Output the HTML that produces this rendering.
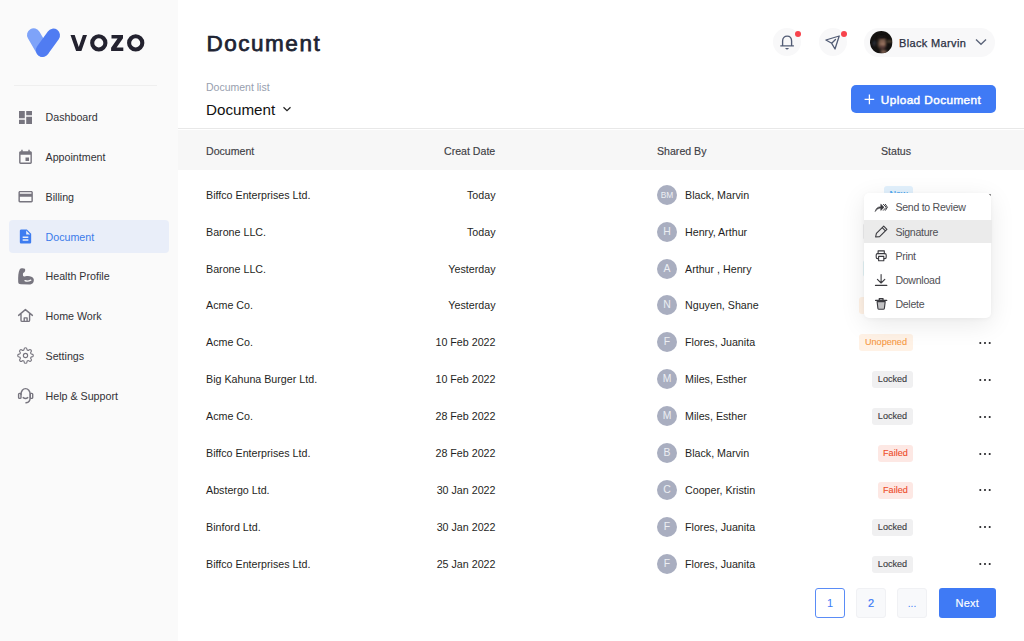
<!DOCTYPE html>
<html><head><meta charset="utf-8">
<style>
*{box-sizing:border-box;margin:0;padding:0}
html,body{width:1024px;height:641px;overflow:hidden;background:#fff;font-family:"Liberation Sans",sans-serif;color:#1f1f24}
.abs{position:absolute}
#side{position:absolute;left:0;top:0;width:178px;height:641px;background:#fafafa}
.nav{position:absolute;left:0;width:178px;height:20px;font-size:10.7px;color:#323237;line-height:20px}
.nav span{position:absolute;left:45.5px;top:0}
.nav svg{position:absolute}
.th{position:absolute;top:144px;font-size:10.6px;color:#404045;line-height:14px;-webkit-text-stroke:0.15px #404045}
.row{position:absolute;left:178px;width:846px;height:37px}
.row .c1{position:absolute;left:28px;top:11.6px;font-size:10.7px;line-height:14px;color:#1f1f24}
.row .c2{position:absolute;right:528.5px;top:11.6px;font-size:10.7px;line-height:14px;color:#1f1f24}
.row .av{position:absolute;left:479px;top:8.6px;width:20px;height:20px;border-radius:50%;background:#a9aec0;color:#eceef3;font-size:10.4px;line-height:20px;text-align:center}
.row .nm{position:absolute;left:507px;top:11.6px;font-size:10.7px;line-height:14px;color:#1f1f24}
.badge{position:absolute;right:111px;top:10.3px;height:17px;line-height:16px;text-align:center;border-radius:3px;font-size:9.1px;-webkit-text-stroke:0.12px currentColor}
.b-lock{background:#f0f0f1;color:#3a3a3f;width:41px}
.b-fail{background:#fde8e4;color:#ee4c2a;width:35.2px}
.b-unop{background:#fff2e6;color:#f79a45;width:54px}
.b-new{background:#e2f1fd;color:#3aa0f0;width:29px}
.b-app{background:#e3f3f6;color:#36a6a0;width:50.5px}
.b-rev{background:#efeff0;color:#2f2f33;width:50.5px}
.dots{position:absolute;left:801.1px;top:16.9px;width:14px;height:4px}
.mi{position:absolute;left:31.4px;font-size:10.6px;line-height:14px;color:#505055;letter-spacing:-0.28px}
</style></head><body>
<div id="side">
  <!-- logo -->
  <svg class="abs" style="left:0;top:0" width="178" height="70" viewBox="0 0 178 70">
    <line x1="33.7" y1="35" x2="42.5" y2="50.2" stroke="#7ea3f9" stroke-width="13.4" stroke-linecap="round"/>
    <line x1="53.3" y1="35.3" x2="42.6" y2="50.2" stroke="#507cf2" stroke-width="13.4" stroke-linecap="round"/>
    <g fill="#23222f">
      <polygon points="70.5,35.1 74.7,35.1 78.75,46.9 82.9,35.1 87,35.1 81.4,50.9 76.1,50.9"/>
      <circle cx="98.8" cy="42.9" r="6.6" fill="none" stroke="#23222f" stroke-width="4.1"/>
      <polygon points="111.5,35 123,35 123,38.3 116.6,47.6 123.3,47.6 123.3,51 111.1,51 111.1,47.8 117.6,38.4 111.5,38.4"/>
      <circle cx="135.7" cy="42.9" r="6.6" fill="none" stroke="#23222f" stroke-width="4.1"/>
    </g>
  </svg>
  <div class="abs" style="left:14px;top:84.5px;width:143px;height:1px;background:#efefef"></div>

  <div class="abs" style="left:9px;top:219.7px;width:160px;height:33.7px;border-radius:4px;background:#e9eef9"></div>

  <div class="nav" style="top:107px">
    <svg style="left:19px;top:3.5px" width="13" height="13" viewBox="3 3 18 18"><path fill="#77757f" d="M3 13h8V3H3v10zm0 8h8v-6H3v6zm10 0h8V11h-8v10zm0-18v6h8V3h-8z"/></svg>
    <span>Dashboard</span></div>
  <div class="nav" style="top:147px">
    <svg style="left:17px;top:2px" width="17" height="17" viewBox="0 0 24 24"><path fill="#77757f" d="M17 12h-5v5h5v-5zM16 1v2H8V1H6v2H5c-1.11 0-1.99.9-1.99 2L3 19c0 1.1.89 2 2 2h14c1.1 0 2-.9 2-2V5c0-1.1-.9-2-2-2h-1V1h-2zm3 18H5V8h14v11z"/></svg>
    <span>Appointment</span></div>
  <div class="nav" style="top:187px">
    <svg style="left:17px;top:1.2px" width="17.3" height="17.3" viewBox="0 0 24 24"><path fill="#77757f" d="M20 4H4c-1.11 0-1.99.89-1.99 2L2 18c0 1.11.89 2 2 2h16c1.11 0 2-.89 2-2V6c0-1.11-.89-2-2-2zm0 14H4v-6h16v6zm0-10H4V6h16v2z"/></svg>
    <span>Billing</span></div>
  <div class="nav" style="top:227px;color:#3b7bea">
    <svg style="left:17px;top:1px" width="17" height="17" viewBox="0 0 24 24"><path fill="#3d7cf0" d="M14 2H6c-1.1 0-1.99.9-1.99 2L4 20c0 1.1.89 2 1.99 2H18c1.1 0 2-.9 2-2V8l-6-6zm2 16H8v-2h8v2zm0-4H8v-2h8v2zm-3-5V3.5L18.5 9H13z"/></svg>
    <span>Document</span></div>
  <div class="nav" style="top:266px">
    <svg style="left:12px;top:-4px" width="28" height="28" viewBox="0 0 28 28"><path fill="#77757f" d="M6.2 20 C6.0 15 6.2 10 7.8 7.2 C8.5 6.0 11.5 5.8 12.8 6.8 C13.5 7.5 13.3 9.8 12.3 10.3 C11 10.8 10.8 11.5 11 13.5 C11.2 14.6 12.2 14.5 13.5 14.2 C16.5 13.5 20.5 14 21.6 16.8 C22.5 19.5 21 22.5 17 22.6 L9 22.3 C7 22.2 6.3 21.5 6.2 20 Z"/><path d="M13 18.6 C14.5 19.3 17 19.1 18.8 18.2" fill="none" stroke="#f9f9f9" stroke-width="1.3" stroke-linecap="round"/></svg>
    <span>Health Profile</span></div>
  <div class="nav" style="top:306px">
    <svg style="left:12px;top:-4px" width="28" height="28" viewBox="0 0 28 28"><path fill="none" stroke="#77757f" stroke-width="1.4" stroke-linejoin="round" stroke-linecap="round" d="M6.6 13.4 L13.4 7.6 L20.4 13.4 M9 11.8 V18.2 Q9 19.4 10.2 19.4 H16.4 Q17.6 19.4 17.6 18.2 V11.8 M12.2 19.4 V15.9 H15.1 V19.4"/></svg>
    <span>Home Work</span></div>
  <div class="nav" style="top:346px">
    <svg style="left:16.9px;top:1.4px" width="17" height="17" viewBox="0 0 24 24"><path fill="none" stroke="#77757f" stroke-width="1.6" d="M12 15a3 3 0 1 0 0-6 3 3 0 0 0 0 6z"/><path fill="none" stroke="#77757f" stroke-width="1.6" d="M19.4 15a1.65 1.65 0 0 0 .33 1.82l.06.06a2 2 0 0 1-2.83 2.83l-.06-.06a1.65 1.650 0 0 0-1.82-.33 1.65 1.65 0 0 0-1 1.51V21a2 2 0 0 1-4 0v-.09A1.65 1.65 0 0 0 9 19.4a1.65 1.65 0 0 0-1.82.33l-.06.06a2 2 0 0 1-2.83-2.830l.06-.06a1.65 1.65 0 0 0 .33-1.82 1.65 1.65 0 0 0-1.51-1H3a2 2 0 0 1 0-4h.09A1.65 1.65 0 0 0 4.6 9a1.65 1.65 0 0 0-.33-1.82l-.06-.06a2 2 0 0 1 2.83-2.83l.06.06a1.65 1.65 0 0 0 1.82.33H9a1.65 1.65 0 0 0 1-1.51V3a2 2 0 0 1 4 0v.09a1.65 1.65 0 0 0 1 1.51 1.65 1.65 0 0 0 1.82-.33l.06-.06a2 2 0 0 1 2.83 2.83l-.06.06a1.65 1.65 0 0 0-.33 1.82V9a1.65 1.65 0 0 0 1.51 1H21a2 2 0 0 1 0 4h-.09a1.65 1.65 0 0 0-1.51 1z"/></svg>
    <span>Settings</span></div>
  <div class="nav" style="top:386px">
    <svg style="left:12px;top:-4px" width="28" height="28" viewBox="0 0 28 28"><g fill="none" stroke="#77757f" stroke-width="1.4" stroke-linecap="round"><path d="M9 12.5 C9 9 11 6.6 13.5 6.6 C16 6.6 18.2 9 18.2 12.5 V15.5 C18.2 18.5 16.6 20.5 14 20.8"/><rect x="6.6" y="11.4" width="2.4" height="5" rx="0.9"/><rect x="18.2" y="11.4" width="2.5" height="5" rx="0.9"/><path d="M11.2 15.6 Q13.5 17.3 15.8 15.6"/></g></svg>
    <span>Help &amp; Support</span></div>
</div>

<!-- header -->
<div class="abs" style="left:206.6px;top:28.6px;font-size:22.5px;font-weight:400;-webkit-text-stroke:0.75px #1e2433;letter-spacing:1.5px;color:#1e2433;line-height:30px">Document</div>
<div class="abs" style="left:206px;top:81px;font-size:10.5px;color:#979eae;line-height:13px">Document list</div>
<div class="abs" style="left:206px;top:100.5px;font-size:15.2px;color:#111;line-height:18px">Document</div>
<svg class="abs" style="left:282px;top:105px" width="10" height="8" viewBox="0 0 10 8"><path d="M1.5 2.2 L5 5.6 L8.5 2.2" fill="none" stroke="#222" stroke-width="1.2"/></svg>

<div class="abs" style="left:773px;top:28px;width:28px;height:28px;border-radius:50%;background:#f8f8f9"></div>
<svg class="abs" style="left:775px;top:30px" width="25" height="25" viewBox="0 0 25 25"><path d="M7.6 15.6 V11 C7.6 7.8 9.6 6.1 12.1 6.1 C14.6 6.1 16.6 7.8 16.6 11 V15.6 M5.3 15.9 H18.9" fill="none" stroke="#525c75" stroke-width="1.35"/><path d="M10.1 17.9 H14 Q13 19.5 12.05 19.5 Q11.1 19.5 10.1 17.9 Z" fill="#525c75"/></svg>
<div class="abs" style="left:795px;top:31px;width:6px;height:6px;border-radius:50%;background:#f7434c"></div>

<div class="abs" style="left:819px;top:28px;width:28px;height:28px;border-radius:50%;background:#f8f8f9"></div>
<svg class="abs" style="left:820px;top:30px" width="28" height="25" viewBox="0 0 28 25"><path d="M5.9 10 L19.2 6 L15 19 L11.7 13.3 Z M11.7 13.3 L15.5 9.5" fill="none" stroke="#525c75" stroke-width="1.3" stroke-linejoin="round" stroke-linecap="round"/></svg>
<div class="abs" style="left:841px;top:31px;width:6px;height:6px;border-radius:50%;background:#f7434c"></div>

<div class="abs" style="left:864px;top:28px;width:131px;height:29px;border-radius:15px;background:#f8f8f9"></div>
<svg class="abs" style="left:870px;top:31px" width="22.5" height="22.5" viewBox="0 0 22 22">
  <defs><clipPath id="avc"><circle cx="11" cy="11" r="11"/></clipPath>
  <filter id="avb" x="-50%" y="-50%" width="200%" height="200%"><feGaussianBlur stdDeviation="0.8"/></filter></defs>
  <g clip-path="url(#avc)">
    <rect width="22" height="22" fill="#141210"/>
    <g filter="url(#avb)">
      <rect x="16.5" y="9.6" width="5" height="1.3" fill="#7a6448"/>
      <ellipse cx="4.2" cy="12" rx="1.6" ry="2.6" fill="#2a2f38"/>
      <ellipse cx="11.8" cy="12.4" rx="4.1" ry="5.8" fill="#6e5244"/>
      <ellipse cx="12.4" cy="10.6" rx="2.8" ry="3.4" fill="#a8806a"/>
      <rect x="9" y="10.2" width="6.4" height="1" fill="#3a2a24"/>
      <ellipse cx="11.4" cy="6.6" rx="4.6" ry="2.2" fill="#1c1512"/>
      <ellipse cx="12.2" cy="16" rx="2.8" ry="2" fill="#4a3432"/>
      <ellipse cx="12.6" cy="15.4" rx="1.3" ry="0.6" fill="#8a5c5a"/>
      <ellipse cx="13.4" cy="20.4" rx="3.2" ry="1.4" fill="#9a7462"/>
    </g>
  </g>
</svg>
<div class="abs" style="left:899px;top:36.2px;font-size:11px;color:#2a2f3f;-webkit-text-stroke:0.25px #2a2f3f;line-height:14px;letter-spacing:0.35px">Black Marvin</div>
<svg class="abs" style="left:975px;top:38px" width="12" height="8" viewBox="0 0 12 8"><path d="M1 1.5 L6 6.3 L11 1.5" fill="none" stroke="#5a6378" stroke-width="1.3"/></svg>

<div class="abs" style="left:850.8px;top:85.3px;width:144.8px;height:28px;border-radius:5px;background:#3f7af5"></div>
<svg class="abs" style="left:863.5px;top:94.2px" width="11" height="11" viewBox="0 0 11 11"><path d="M5.4 0.6 V10.2 M0.6 5.4 H10.2" stroke="#fff" stroke-width="1.3"/></svg>
<div class="abs" style="left:880.8px;top:92.6px;font-size:11.8px;font-weight:400;-webkit-text-stroke:0.45px #fff;letter-spacing:0.4px;color:#fff;line-height:14px">Upload Document</div>

<div class="abs" style="left:178px;top:128px;width:846px;height:1px;background:#e8e8e8"></div>
<div class="abs" style="left:178px;top:130px;width:846px;height:40px;background:#f7f7f7"></div>
<div class="th" style="left:206px">Document</div>
<div class="th" style="left:444px">Creat Date</div>
<div class="th" style="left:657px">Shared By</div>
<div class="th" style="left:881px">Status</div>

<!--ROWS-->
<div class="row" style="top:176.1px"><div class="c1">Biffco Enterprises Ltd.</div><div class="c2">Today</div><div class="av" style="font-size:8.4px">BM</div><div class="nm">Black, Marvin</div><div class="badge b-new">New</div><svg class="dots" width="14" height="4" viewBox="0 0 14 4"><g fill="#222226"><circle cx="1.3" cy="2" r="1.05"/><circle cx="6" cy="2" r="1.05"/><circle cx="10.7" cy="2" r="1.05"/></g></svg></div>
<div class="row" style="top:213.03px"><div class="c1">Barone LLC.</div><div class="c2">Today</div><div class="av">H</div><div class="nm">Henry, Arthur</div><div class="badge b-rev">Reviewed</div><svg class="dots" width="14" height="4" viewBox="0 0 14 4"><g fill="#222226"><circle cx="1.3" cy="2" r="1.05"/><circle cx="6" cy="2" r="1.05"/><circle cx="10.7" cy="2" r="1.05"/></g></svg></div>
<div class="row" style="top:249.96px"><div class="c1">Barone LLC.</div><div class="c2">Yesterday</div><div class="av">A</div><div class="nm">Arthur , Henry</div><div class="badge b-app">Approved</div><svg class="dots" width="14" height="4" viewBox="0 0 14 4"><g fill="#222226"><circle cx="1.3" cy="2" r="1.05"/><circle cx="6" cy="2" r="1.05"/><circle cx="10.7" cy="2" r="1.05"/></g></svg></div>
<div class="row" style="top:286.89px"><div class="c1">Acme Co.</div><div class="c2">Yesterday</div><div class="av">N</div><div class="nm">Nguyen, Shane</div><div class="badge b-unop">Unopened</div><svg class="dots" width="14" height="4" viewBox="0 0 14 4"><g fill="#222226"><circle cx="1.3" cy="2" r="1.05"/><circle cx="6" cy="2" r="1.05"/><circle cx="10.7" cy="2" r="1.05"/></g></svg></div>
<div class="row" style="top:323.82px"><div class="c1">Acme Co.</div><div class="c2">10 Feb 2022</div><div class="av">F</div><div class="nm">Flores, Juanita</div><div class="badge b-unop">Unopened</div><svg class="dots" width="14" height="4" viewBox="0 0 14 4"><g fill="#222226"><circle cx="1.3" cy="2" r="1.05"/><circle cx="6" cy="2" r="1.05"/><circle cx="10.7" cy="2" r="1.05"/></g></svg></div>
<div class="row" style="top:360.75px"><div class="c1">Big Kahuna Burger Ltd.</div><div class="c2">10 Feb 2022</div><div class="av">M</div><div class="nm">Miles, Esther</div><div class="badge b-lock">Locked</div><svg class="dots" width="14" height="4" viewBox="0 0 14 4"><g fill="#222226"><circle cx="1.3" cy="2" r="1.05"/><circle cx="6" cy="2" r="1.05"/><circle cx="10.7" cy="2" r="1.05"/></g></svg></div>
<div class="row" style="top:397.68px"><div class="c1">Acme Co.</div><div class="c2">28 Feb 2022</div><div class="av">M</div><div class="nm">Miles, Esther</div><div class="badge b-lock">Locked</div><svg class="dots" width="14" height="4" viewBox="0 0 14 4"><g fill="#222226"><circle cx="1.3" cy="2" r="1.05"/><circle cx="6" cy="2" r="1.05"/><circle cx="10.7" cy="2" r="1.05"/></g></svg></div>
<div class="row" style="top:434.61px"><div class="c1">Biffco Enterprises Ltd.</div><div class="c2">28 Feb 2022</div><div class="av">B</div><div class="nm">Black, Marvin</div><div class="badge b-fail">Failed</div><svg class="dots" width="14" height="4" viewBox="0 0 14 4"><g fill="#222226"><circle cx="1.3" cy="2" r="1.05"/><circle cx="6" cy="2" r="1.05"/><circle cx="10.7" cy="2" r="1.05"/></g></svg></div>
<div class="row" style="top:471.54px"><div class="c1">Abstergo Ltd.</div><div class="c2">30 Jan 2022</div><div class="av">C</div><div class="nm">Cooper, Kristin</div><div class="badge b-fail">Failed</div><svg class="dots" width="14" height="4" viewBox="0 0 14 4"><g fill="#222226"><circle cx="1.3" cy="2" r="1.05"/><circle cx="6" cy="2" r="1.05"/><circle cx="10.7" cy="2" r="1.05"/></g></svg></div>
<div class="row" style="top:508.47px"><div class="c1">Binford Ltd.</div><div class="c2">30 Jan 2022</div><div class="av">F</div><div class="nm">Flores, Juanita</div><div class="badge b-lock">Locked</div><svg class="dots" width="14" height="4" viewBox="0 0 14 4"><g fill="#222226"><circle cx="1.3" cy="2" r="1.05"/><circle cx="6" cy="2" r="1.05"/><circle cx="10.7" cy="2" r="1.05"/></g></svg></div>
<div class="row" style="top:545.4px"><div class="c1">Biffco Enterprises Ltd.</div><div class="c2">25 Jan 2022</div><div class="av">F</div><div class="nm">Flores, Juanita</div><div class="badge b-lock">Locked</div><svg class="dots" width="14" height="4" viewBox="0 0 14 4"><g fill="#222226"><circle cx="1.3" cy="2" r="1.05"/><circle cx="6" cy="2" r="1.05"/><circle cx="10.7" cy="2" r="1.05"/></g></svg></div>
<!--/ROWS-->


<!-- pagination -->
<div class="abs" style="left:815px;top:588px;width:30px;height:30px;border:1px solid #5a8cf6;border-radius:3px;background:#fff;color:#3d7bf6;font-size:11px;line-height:28px;text-align:center">1</div>
<div class="abs" style="left:856px;top:588px;width:30px;height:30px;border:1px solid #f0f1f4;border-radius:3px;background:#f8f9fb;color:#3d7bf6;font-size:11px;line-height:28px;text-align:center;-webkit-text-stroke:0.2px #3d7bf6">2</div>
<div class="abs" style="left:897px;top:588px;width:30px;height:30px;border:1px solid #f0f1f4;border-radius:3px;background:#f8f9fb;color:#3d7bf6;font-size:10px;line-height:30px;text-align:center">...</div>
<div class="abs" style="left:939px;top:588.3px;width:56.5px;height:29.7px;border-radius:3px;background:#3f7af5;color:#fff;font-size:11px;line-height:30px;text-align:center;-webkit-text-stroke:0.15px #fff;letter-spacing:0.2px">Next</div>

<!-- context menu -->
<div class="abs" style="left:864px;top:193.4px;width:127.2px;height:124.6px;border-radius:5px;background:#fff;box-shadow:0 6px 26px rgba(0,0,0,0.09),0 1px 4px rgba(0,0,0,0.04)">
  <div class="abs" style="left:0;top:27px;width:128px;height:23px;background:#ebebeb"></div>
  <svg class="abs" style="left:0;top:0" width="128" height="125" viewBox="0 0 128 125">
    <g fill="none" stroke="#3a3a3f" stroke-width="1.1" stroke-linejoin="round" stroke-linecap="round">
      <path d="M11.3 18.2 C11.8 15.6 13.6 13.8 16.8 13.7 V11.2 L20 14.3 L16.8 17.4 V15.1 C14.6 15.1 12.8 16.3 11.3 18.2 Z" fill="#3a3a3f" stroke-width="0.6"/>
      <path d="M19.4 11.3 L22.2 14.3 L19.4 17.3 M21.4 11.3 L23.4 14.3 L21.4 17.3" stroke-width="1"/>
      <path d="M11.6 44 L12.4 40.4 L19.7 33.1 L22.9 36.3 L15.6 43.6 Z M18.2 34.6 L21.4 37.8"/>
      <path d="M14.1 60.6 V57.9 H20.3 V60.6"/>
      <rect x="12.2" y="60.6" width="10" height="5" rx="1.3"/>
      <rect x="14.6" y="63.4" width="5.2" height="4.3" fill="#fff"/>
      <path d="M17.1 81.6 V90 M13.4 86.3 L17.1 90 L20.8 86.3"/>
      <path d="M11.5 92.4 H22.8" stroke-width="1.2"/>
      <path d="M13.1 108.6 L13.9 115.4 Q14.1 116.3 15 116.3 H19.3 Q20.2 116.3 20.4 115.4 L21.2 108.6 Z" fill="#c2c2c4"/>
      <path d="M11.6 107.4 H22.7 M15.3 107 V105.6 H19 V107" stroke-width="1.3"/>
    </g>
  </svg>
  <div class="mi" style="top:7px">Send to Review</div>
  <div class="mi" style="top:31.7px">Signature</div>
  <div class="mi" style="top:55.6px">Print</div>
  <div class="mi" style="top:79.8px">Download</div>
  <div class="mi" style="top:103.7px">Delete</div>
</div>
</body></html>
